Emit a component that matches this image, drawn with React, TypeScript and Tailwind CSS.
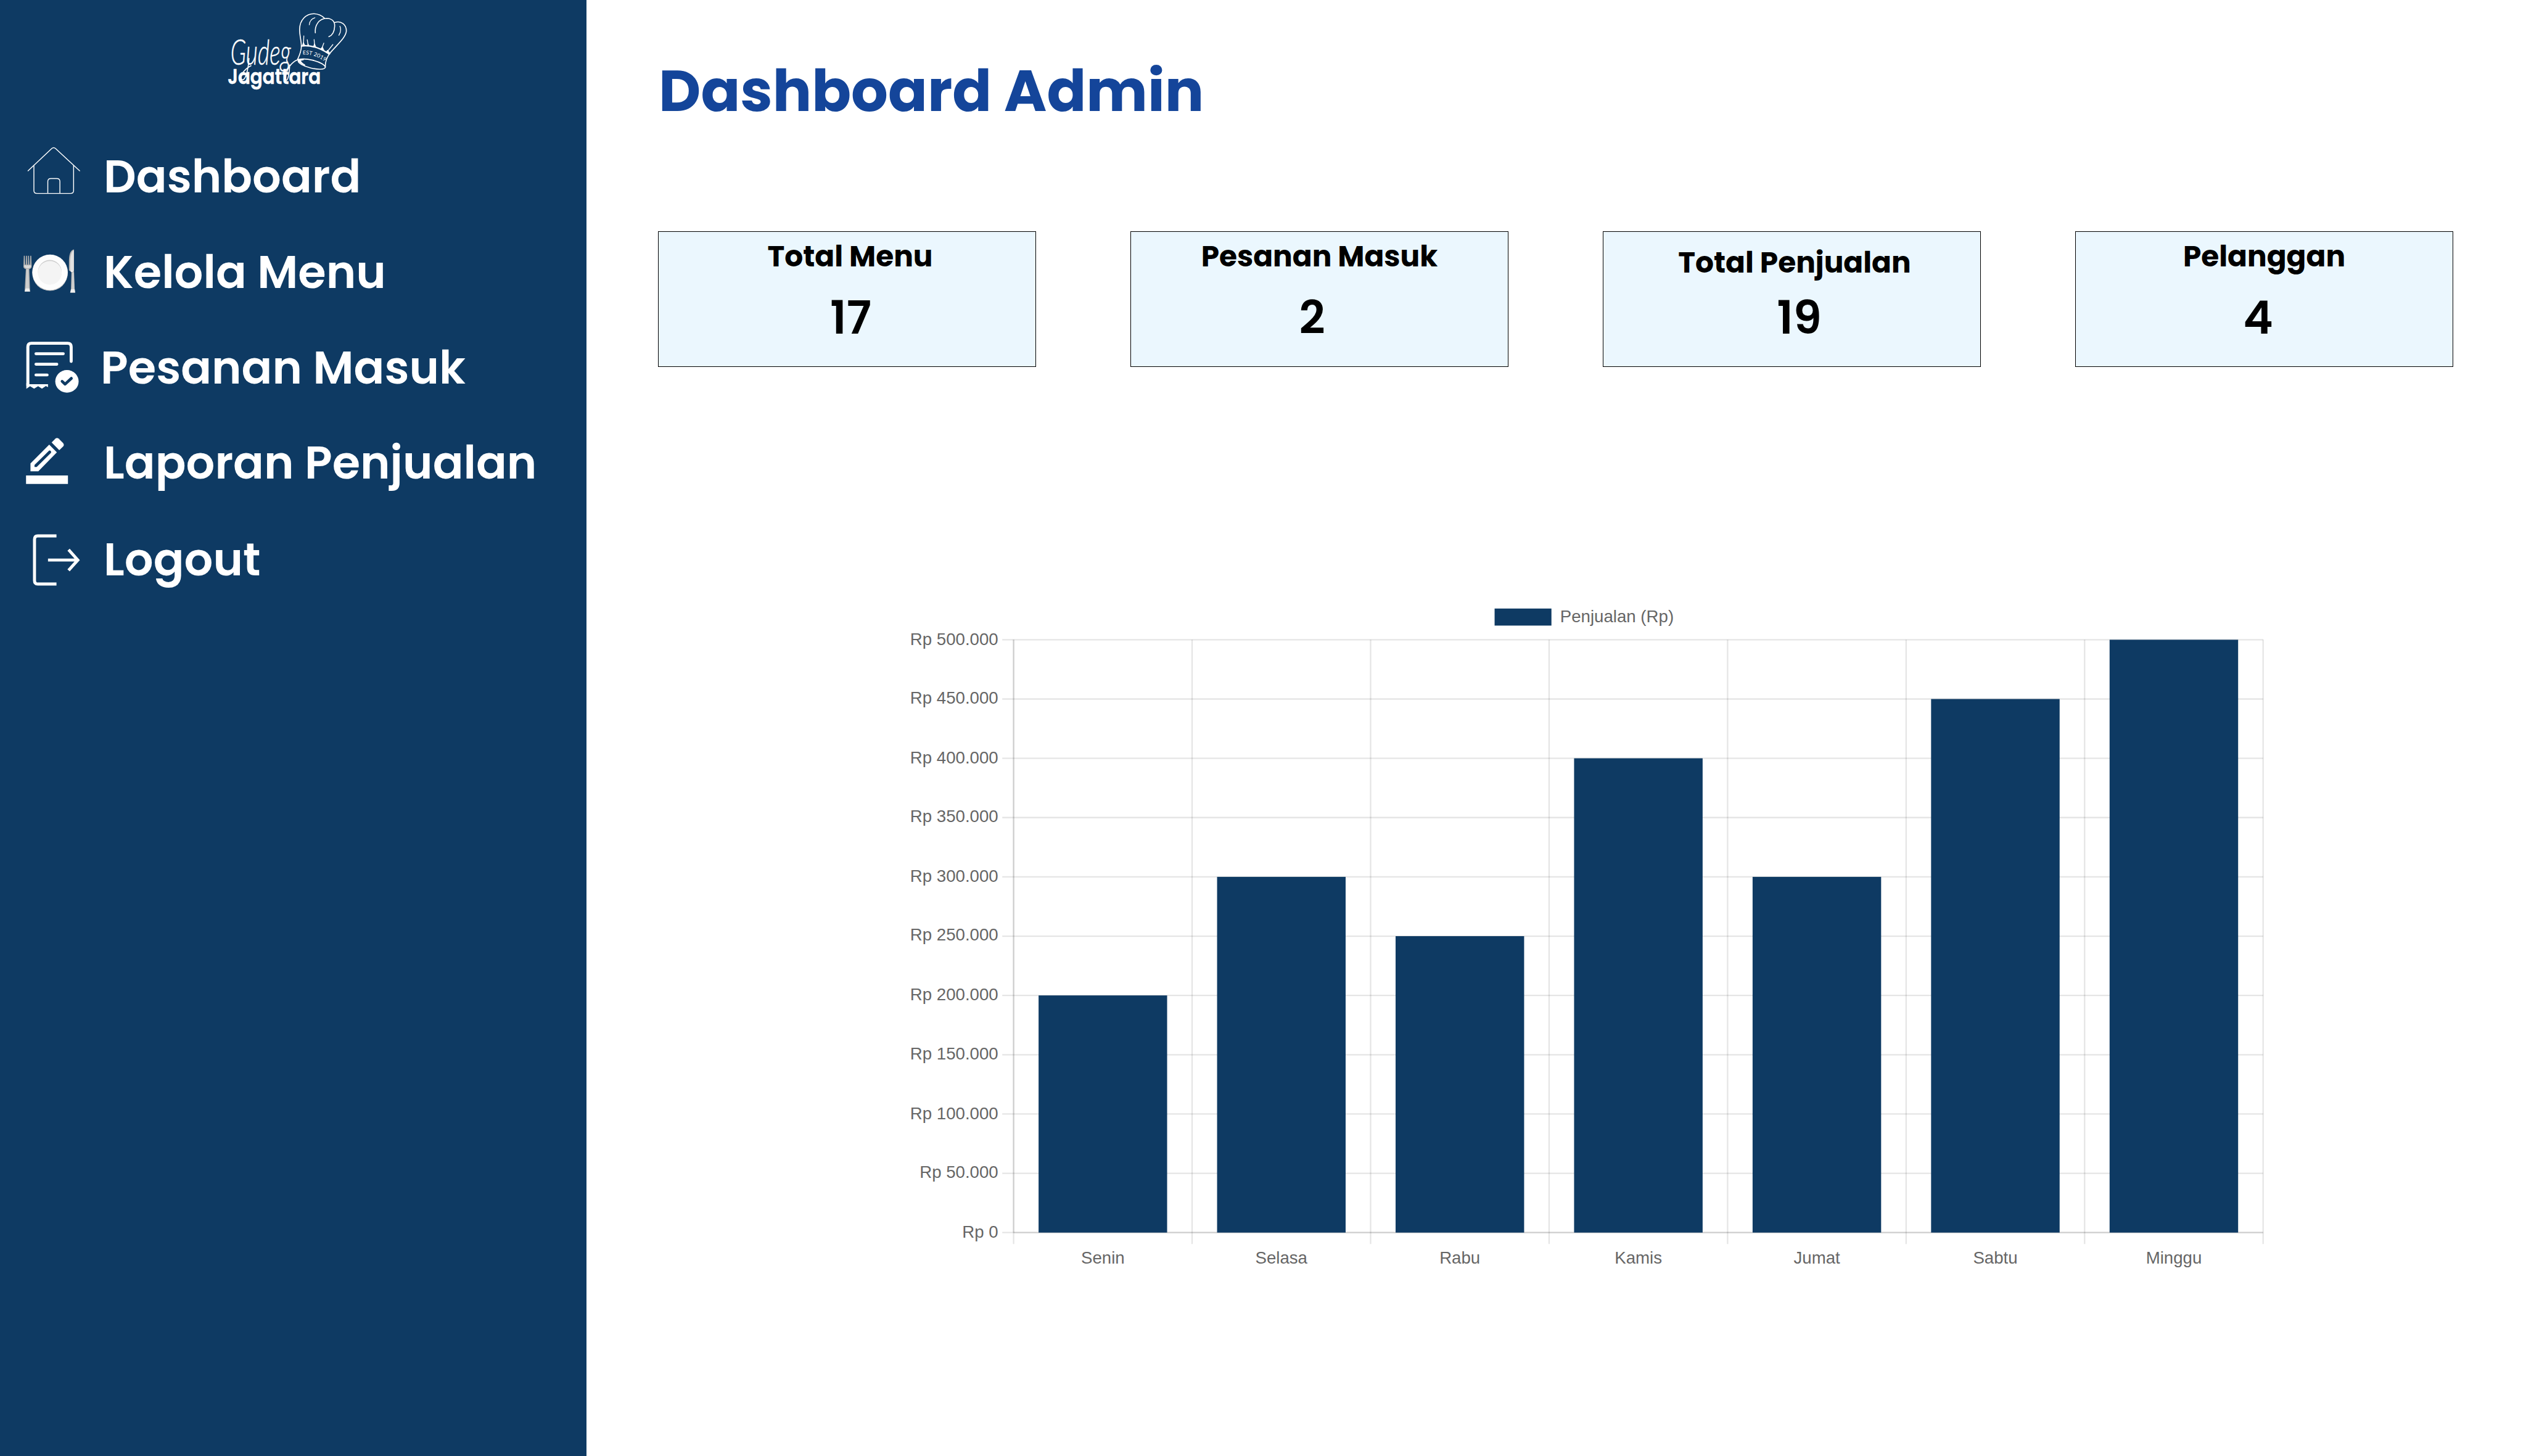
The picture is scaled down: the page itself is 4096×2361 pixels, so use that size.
import type { ReactNode } from "react";

const NAVY = "#0e3a63";

function Logo() {
  return (
    <svg viewBox="0 0 750 510" className="w-[245.1px] h-[166.7px]" fill="none" stroke="#fff" strokeWidth={5} strokeLinecap="round" strokeLinejoin="round">
      <path d="M446 228C444 195 437 175 437 145C438 100 468 68 508 68C532 69 548 78 560 90" />
      <path d="M515 163C512 128 530 92 572 91C600 92 612 108 611 130C610 155 600 175 582 182" />
      <path d="M611 112C642 100 670 122 669 155C664 190 622 222 584 268" />
      <path d="M485 123C487 105 498 92 513 88M637 130C644 145 641 160 632 175" strokeWidth={4} />
      <path d="M458 178L456 224M475 197L479 224M509 196L512 230M557 214L546 244M602 221L573 258" strokeWidth={4} />
      <path d="M450 226L456 210L464 226ZM476 226L479 216L484 227ZM506 229L511 216L518 232ZM540 243L550 232L558 248ZM568 258L576 248L590 266Z" fill="#fff" strokeWidth={2} />
      <path d="M446 228C492 222 542 240 584 268" strokeWidth={7} />
      <path d="M446 228C446 252 438 272 427 295M584 268C570 290 563 312 565 333" />
      <ellipse cx="497" cy="318" rx="69" ry="20" transform="rotate(14 497 318)" />
      <path d="M427 294L456 296L440 300Q444 312 462 322Q436 312 427 294Z" fill="#fff" />
      <path id="hat-band" d="M452 270Q512 268 560 304" stroke="none" />
      <text fill="#fff" stroke="none" fontFamily="Lato, sans-serif" fontSize="27" letterSpacing="0.4">
        <textPath href="#hat-band">EST 2019</textPath>
      </text>
      <path d="M388 322C386 365 380 398 371 398C360 396 372 350 388 328C400 312 410 303 427 297" />
      <path d="M186 290C182 350 168 398 153 396C138 390 148 352 196 326" />
      <text x="94" y="322" fill="#fff" stroke="#fff" strokeWidth={1.6} fontFamily="Lato, sans-serif" fontStyle="italic" fontWeight={300} fontSize="176" textLength="300" lengthAdjust="spacingAndGlyphs">
        Gudeg
      </text>
      <text x="80" y="417" fill="#fff" stroke="#fff" strokeWidth={1.5} fontFamily="Poppins, Inter, sans-serif" fontWeight={600} fontSize="100" textLength="462" lengthAdjust="spacingAndGlyphs">
        Jagattara
      </text>
    </svg>
  );
}

function IconBox({ top, children }: { top: number; children: ReactNode }) {
  return (
    <svg viewBox={`0 ${top} 459 474`} className="w-[150px] h-[154.9px] shrink-0" fill="none" stroke="#fff">
      {children}
    </svg>
  );
}

function HouseIcon() {
  return (
    <IconBox top={-15}>
      <g strokeWidth={4.4} strokeLinecap="round" strokeLinejoin="round">
        <path d="M78 187L195 77Q205 68 215 77L334 187" />
        <path d="M107 161V285Q107 299 121 299H290Q304 299 304 285V161" />
        <path d="M176 298V240Q176 225 191 225H221Q236 225 236 240V298" />
      </g>
    </IconBox>
  );
}

function PlateIcon() {
  return (
    <IconBox top={459}>
      <g stroke="none">
        <circle cx="187" cy="694" r="88" fill="#c9c9c9" />
        <circle cx="187" cy="690" r="88" fill="#fdfdfd" />
        <circle cx="186" cy="686" r="63" fill="#fff" />
        <circle cx="186" cy="688" r="59" fill="#cfcfcf" />
        <circle cx="186" cy="693" r="59" fill="#f4f4f4" />
        <path d="M57 608H62L64 652H67L68 608H73L74 652H77L78 608H83L84 652H87L89 608H94L96 662Q96 672 84 674L88 786H61L67 674Q55 672 55 662Z" fill="#aeaeae" />
        <path d="M58 656H94Q94 668 82 670H70Q58 668 58 656Z" fill="#d9d9d9" />
        <path d="M70 674H80L83 778H66Z" fill="#cdcdcd" />
        <path d="M66 770H84L88 786H61Z" fill="#efefef" />
        <path d="M306 577V684L309 770L312 791H287L291 770L293 690L281 680V630Q283 580 306 577Z" fill="#b4b4b4" />
        <path d="M305 581V682L298 686L287 678V630Q290 588 305 581Z" fill="#e2e2e2" />
        <path d="M297 692L305 690L308 775H294Z" fill="#cfcfcf" />
        <path d="M292 774H309L312 791H287Z" fill="#efefef" />
        <path d="M286 680L303 684L296 690Z" fill="#fff" />
      </g>
    </IconBox>
  );
}

function ReceiptIcon() {
  return (
    <IconBox top={-27}>
      <path d="M77 292V100Q77 82 95 82H274Q292 82 292 100V172" strokeWidth={15} strokeLinecap="round" />
      <path d="M117 134H253M117 186H221M117 239H173" strokeWidth={14} strokeLinecap="round" />
      <path d="M69.500 280L84 285H177V300L166 294L147 307L128 295L108 307L88 295L69.500 308Z" fill="#fff" stroke="none" />
      <ellipse cx="271" cy="271" rx="58" ry="56" fill="#fff" stroke="none" />
      <path d="M247 271L262 285L293 256" stroke={NAVY} strokeWidth={14} strokeLinecap="round" strokeLinejoin="round" />
    </IconBox>
  );
}

function PencilIcon() {
  return (
    <IconBox top={447}>
      <g fill="#fff" stroke="none">
        <path fillRule="evenodd" d="M183 588L221 626L129 720H90V681ZM183 617L110 689V699H121L192 628Q194 616 183 617Z" />
        <path d="M195 577L214 558Q221 551 230 558L252 580Q259 589 252 597L233 615Z" />
        <path d="M68 741H276V783H68Z" />
      </g>
    </IconBox>
  );
}

function LogoutIcon() {
  return (
    <IconBox top={927}>
      <path d="M219 1040H126Q110 1040 110 1058V1261Q110 1279 126 1279H219" strokeWidth={15} />
      <path d="M177 1160H322M279 1109L325 1160L279 1211" strokeWidth={15} />
    </IconBox>
  );
}

function NavItem({ icon, label, className = "" }: { icon: ReactNode; label: string; className?: string }) {
  return (
    <a className={`flex h-[154.9px] items-center ${className}`}>
      {icon}
      <span className="-ml-[1.5px] pb-[3px] text-[73.5px] leading-[100px] font-semibold whitespace-nowrap text-white">{label}</span>
    </a>
  );
}

function StatCard({ title, value, titleClass, valueClass }: { title: string; value: string; titleClass: string; valueClass: string }) {
  return (
    <div className="h-[220px] border border-black bg-[#ebf7fe] text-center text-black">
      <div className={`h-[84px] text-[47px] leading-[60px] font-bold whitespace-nowrap ${titleClass}`}>{title}</div>
      <div className={`text-[73.5px] leading-[112px] font-semibold ${valueClass}`}>{value}</div>
    </div>
  );
}

const SALES = [
  { day: "Senin", value: 200 },
  { day: "Selasa", value: 300 },
  { day: "Rabu", value: 250 },
  { day: "Kamis", value: 400 },
  { day: "Jumat", value: 300 },
  { day: "Sabtu", value: 450 },
  { day: "Minggu", value: 500 },
];

const X0 = 1676.4;
const STEP_X = 295.25;
const X1 = X0 + STEP_X * 7;
const Y0 = 2038.5;
const STEP_Y = 98.06;
const Y_TOP = Y0 - STEP_Y * 10;
const BAR_W = 212.6;

function SalesChart() {
  const ticks = Array.from({ length: 11 }, (_, i) => i);
  const columns = Array.from({ length: 8 }, (_, i) => i);
  return (
    <svg viewBox="1480 980 2300 1140" className="h-[1117.6px] w-[2254.9px]" fontFamily="Liberation Sans, Arial, sans-serif" fontSize="28.2" fill="#666">
      <g stroke="#000" strokeOpacity={0.1} strokeWidth={2.35}>
        {ticks.map((i) => (
          <line key={i} x1={X0 - 18.8} x2={X1} y1={Y0 - i * STEP_Y} y2={Y0 - i * STEP_Y} />
        ))}
        {columns.map((i) => (
          <line key={i} x1={X0 + i * STEP_X} x2={X0 + i * STEP_X} y1={Y_TOP} y2={Y0 + 18.8} />
        ))}
        <line x1={X0} x2={X1} y1={Y0} y2={Y0} />
        <line x1={X0} x2={X0} y1={Y_TOP} y2={Y0} />
      </g>
      {SALES.map((s, i) => (
        <rect key={s.day} x={X0 + i * STEP_X + (STEP_X - BAR_W) / 2} y={Y0 - (s.value / 50) * STEP_Y} width={BAR_W} height={(s.value / 50) * STEP_Y} fill={NAVY} />
      ))}
      {ticks.map((i) => (
        <text key={i} x={1651} y={Y0 - i * STEP_Y + (i % 2 ? 7.4 : 8.4)} textAnchor="end">
          {i === 0 ? "Rp 0" : `Rp ${i * 50}.000`}
        </text>
      ))}
      {SALES.map((s, i) => (
        <text key={s.day} x={X0 + (i + 0.5) * STEP_X} y={2089.6} textAnchor="middle">
          {s.day}
        </text>
      ))}
      <rect x={2472} y={1006.3} width={94} height={28.2} fill={NAVY} />
      <text x={2580.4} y={1028.7}>Penjualan (Rp)</text>
    </svg>
  );
}

export default function App() {
  return (
    <div className="flex h-[2361px] w-[4096px] overflow-hidden bg-white font-[Poppins,Inter,sans-serif]">
      <aside className="w-[951px] shrink-0 bg-[#0e3a63]">
        <div className="h-[210.8px] pl-[343.1px]">
          <Logo />
        </div>
        <nav className="flex flex-col pl-[19.6px]">
          <NavItem icon={<HouseIcon />} label="Dashboard" />
          <NavItem icon={<PlateIcon />} label="Kelola Menu" />
          <NavItem icon={<div className="-mr-[5px]"><ReceiptIcon /></div>} label="Pesanan Masuk" />
          <NavItem icon={<PencilIcon />} label="Laporan Penjualan" />
          <NavItem icon={<LogoutIcon />} label="Logout" className="mt-[2px]" />
        </nav>
      </aside>
      <main className="flex flex-col pt-[97px] pl-[116px]">
        <h1 className="pl-px text-[94.1px] leading-[100px] font-bold text-[#14459a]">Dashboard Admin</h1>
        <section className="mt-[178px] grid grid-cols-[repeat(4,613px)] gap-x-[153px]">
          <StatCard title="Total Menu" value="17" titleClass="pt-[10px] pl-[10px]" valueClass="pl-[12px]" />
          <StatCard title="Pesanan Masuk" value="2" titleClass="pt-[10px]" valueClass="pr-[24px]" />
          <StatCard title="Total Penjualan" value="19" titleClass="pt-[20px] pl-[9px]" valueClass="pl-[24px]" />
          <StatCard title="Pelanggan" value="4" titleClass="pt-[10px]" valueClass="pr-[20px]" />
        </section>
        <section className="mt-[366px] ml-[383.9px]">
          <SalesChart />
        </section>
      </main>
    </div>
  );
}
